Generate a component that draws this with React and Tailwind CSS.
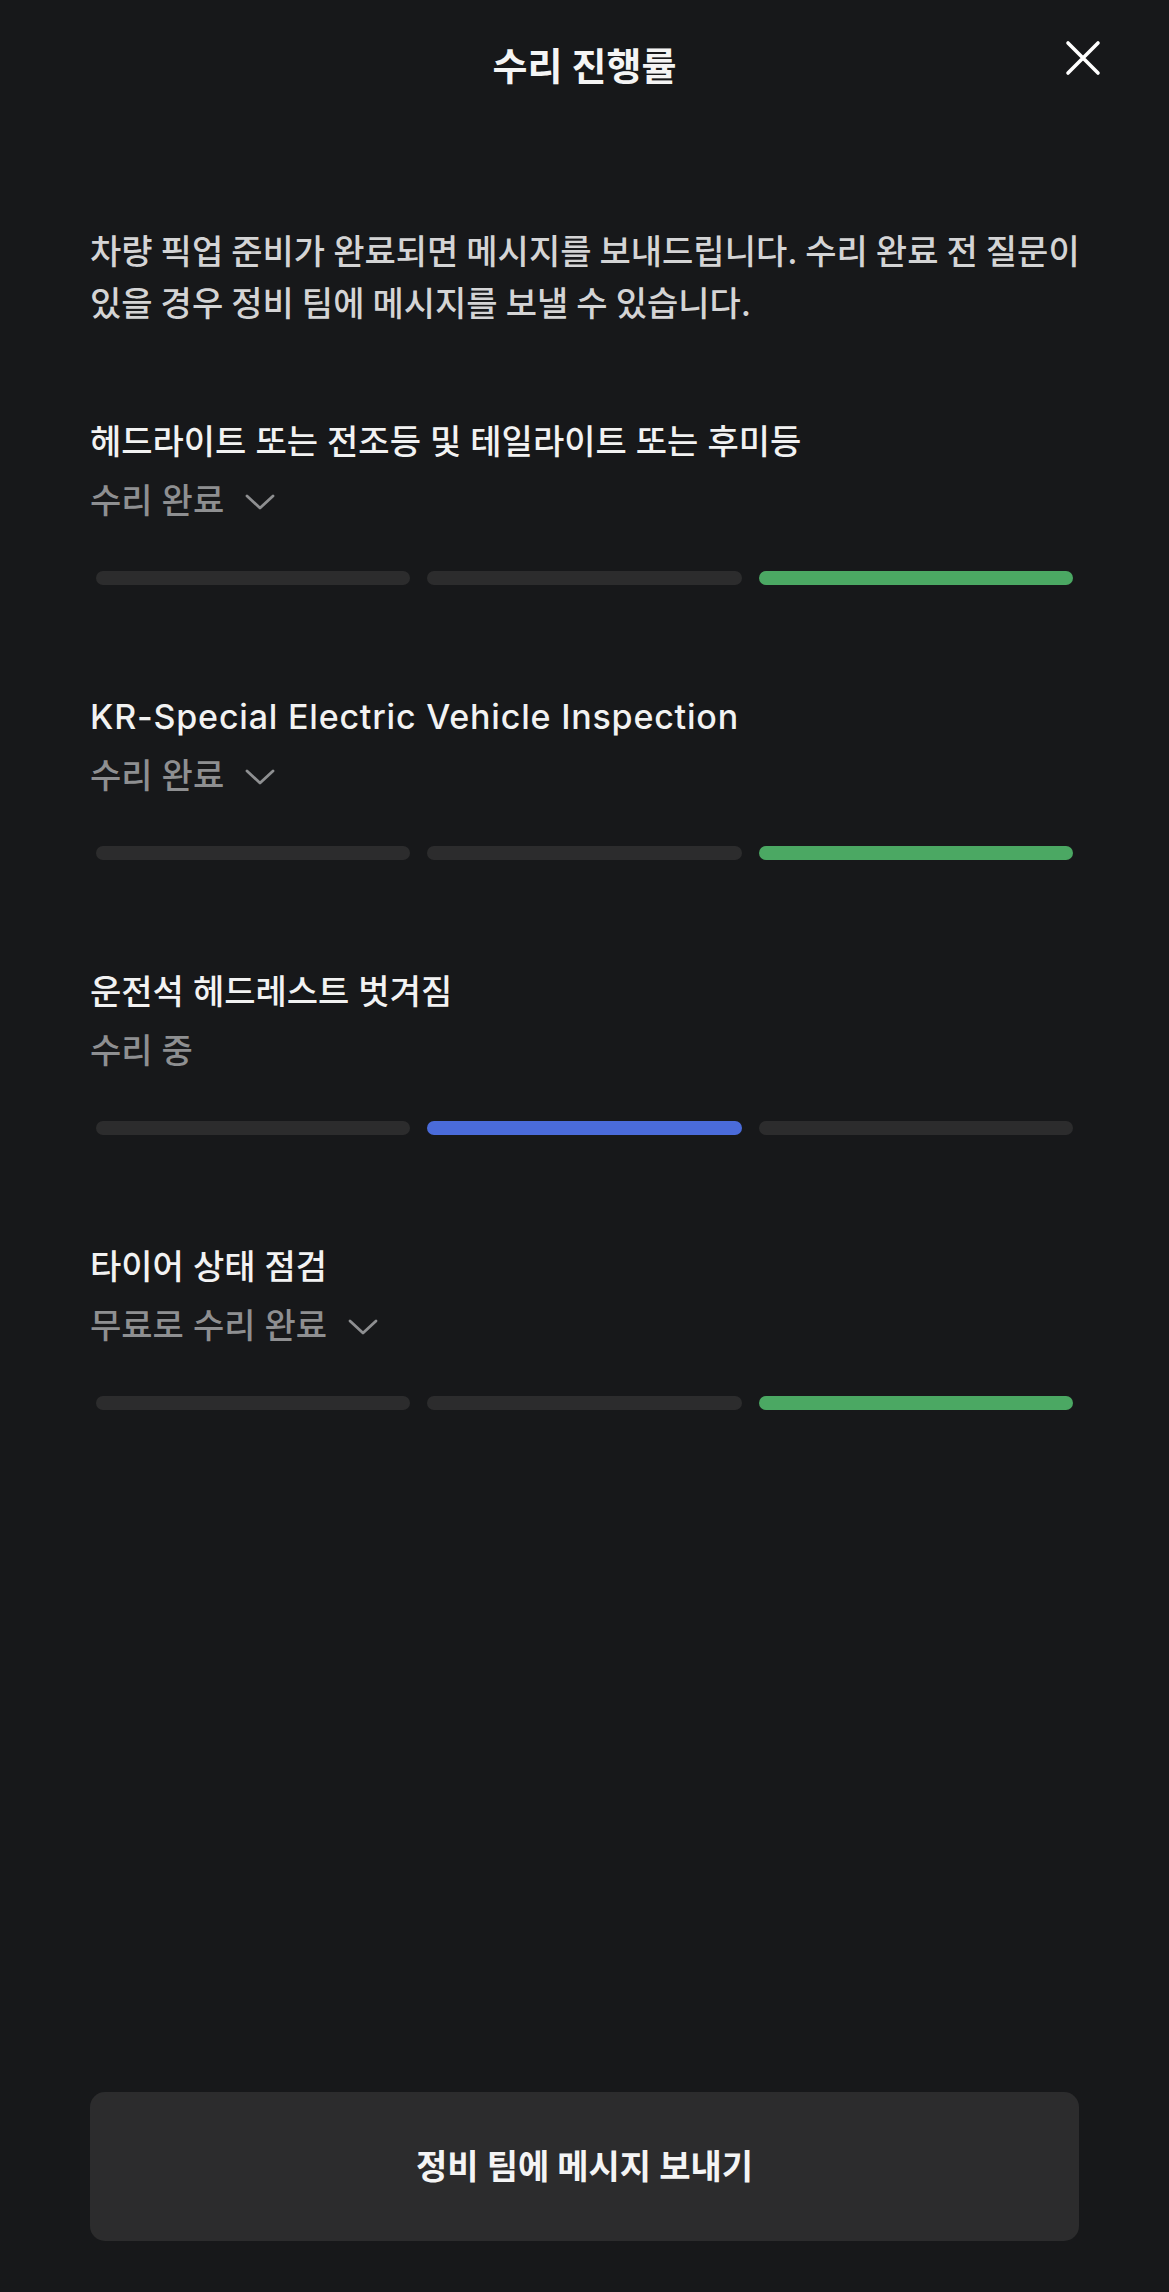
const items = [
  { title: "헤드라이트 또는 전조등 및 테일라이트 또는 후미등", status: "수리 완료", chevron: true, step: 2, tone: "green" },
  { title: "KR-Special Electric Vehicle Inspection", status: "수리 완료", chevron: true, step: 2, tone: "green", latin: true },
  { title: "운전석 헤드레스트 벗겨짐", status: "수리 중", chevron: false, step: 1, tone: "blue" },
  { title: "타이어 상태 점검", status: "무료로 수리 완료", chevron: true, step: 2, tone: "green" },
];

function Chevron() {
  return (
    <svg width="32" height="18" viewBox="0 0 32 18" fill="none" className="ml-[20px] mt-[2px]">
      <path d="M3 3 L16 15 L29 3" stroke="#8e8f91" strokeWidth="2.8" strokeLinecap="round" strokeLinejoin="round" />
    </svg>
  );
}

function Progress({ step, tone }) {
  return (
    <div className="flex gap-[17px] px-[6px]">
      {[0, 1, 2].map((i) => (
        <div
          key={i}
          className={
            "h-[14px] flex-1 rounded-full " +
            (i === step ? (tone === "green" ? "bg-[#4ba863]" : "bg-[#4a6bda]") : "bg-[#2c2c2d]")
          }
        />
      ))}
    </div>
  );
}

export default function App() {
  return (
    <div
      className="min-h-[2292px] bg-[#17181a] flex flex-col text-white"
      style={{ fontFamily: 'Inter, "Noto Sans CJK KR", "Noto Sans", sans-serif' }}
    >
      <div className="relative pt-[42px] h-[90px] flex justify-center">
        <h1 className="text-[38px] leading-[48px] font-bold text-[#f4f4f4]">수리 진행률</h1>
        <button className="absolute right-[68px] top-[40px]">
          <svg width="36" height="36" viewBox="0 0 36 36" fill="none">
            <path d="M3 3 L33 33 M33 3 L3 33" stroke="#ffffff" strokeWidth="3.6" strokeLinecap="round" />
          </svg>
        </button>
      </div>

      <div className="px-[90px]">
        <p className="mt-[136px] -mr-[12px] text-[34px] leading-[52px] font-medium text-[#d4d4d5] [word-spacing:-1px]">
          차량 픽업 준비가 완료되면 메시지를 보내드립니다. 수리 완료 전 질문이 있을 경우 정비 팀에 메시지를 보낼 수 있습니다.
        </p>

        <div className="mt-[90px] flex flex-col gap-[110px]">
          {items.map((it) => (
            <div key={it.title}>
              <div
                className={
                  "text-[34px] leading-[44px] font-medium text-[#f2f2f2] " + (it.latin ? "tracking-[0.8px]" : "")
                }
              >
                {it.title}
              </div>
              <div className="mt-[15px] flex items-center text-[34px] leading-[44px] font-medium text-[#8e8f91]">
                <span>{it.status}</span>
                {it.chevron && <Chevron />}
              </div>
              <div className="mt-[48px]">
                <Progress step={it.step} tone={it.tone} />
              </div>
            </div>
          ))}
        </div>
      </div>

      <div className="mt-auto px-[90px] pb-[51px]">
        <button className="w-full h-[149px] rounded-[15px] bg-[#2c2c2d] text-[34px] font-bold text-[#f4f4f4]">
          정비 팀에 메시지 보내기
        </button>
      </div>
    </div>
  );
}
